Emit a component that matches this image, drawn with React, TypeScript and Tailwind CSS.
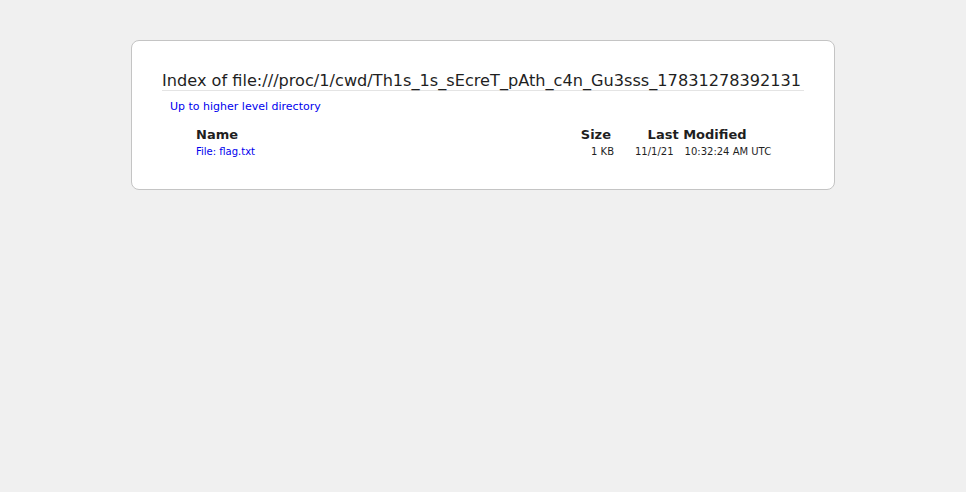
const rows = [{ name: 'File: flag.txt', size: '1 KB', date: '11/1/21', time: '10:32:24 AM UTC' }]

export default function App() {
  return (
    <div className="min-h-screen bg-[#f0f0f0] pt-[40px] font-['DejaVu_Sans',sans-serif] text-[#1f1f1f]">
      <div className="mx-auto w-[704px] h-[150px] rounded-[8px] border border-[#c4c4c4] bg-white px-[30px] pt-[30px]">
        <h1 className="border-b border-[#e4e4e4] text-[16.15px] leading-[19px] font-normal">
          Index of file:///proc/1/cwd/Th1s_1s_sEcreT_pAth_c4n_Gu3sss_17831278392131
        </h1>
        <p className="mt-[9px] ml-[8px] text-[11px] leading-[14px]">
          <a href="#" className="text-[#0000ee]">Up to higher level directory</a>
        </p>
        <table className="ml-[34px] mt-[13px] border-collapse">
          <thead>
            <tr className="text-[13px] leading-[16px] font-bold">
              <th className="w-[370px] p-0 text-left">Name</th>
              <th className="w-[48px] p-0 pr-[3px] text-right">Size</th>
              <th colSpan={2} className="p-0 pl-[9px] text-center">Last Modified</th>
            </tr>
          </thead>
          <tbody>
            {rows.map((r) => (
              <tr key={r.name} className="text-[10px] leading-[16px]">
                <td className="p-0 pt-[1px]">
                  <a href="#" className="text-[#0000ee]">{r.name}</a>
                </td>
                <td className="p-0 pt-[1px] text-right">{r.size}</td>
                <td className="p-0 pt-[1px] pl-[21px]">{r.date}</td>
                <td className="p-0 pt-[1px] pl-[11px]">{r.time}</td>
              </tr>
            ))}
          </tbody>
        </table>
      </div>
    </div>
  )
}
